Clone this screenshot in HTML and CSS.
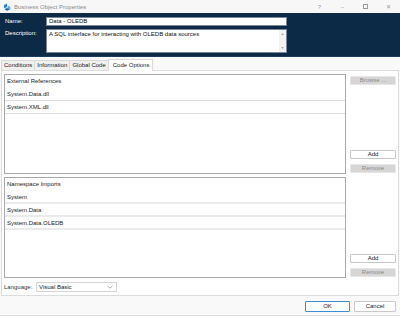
FILE: index.html
```html
<!DOCTYPE html>
<html lang="en">
<head>
  <meta charset="UTF-8">
  <title>Business Object Properties</title>
  <link rel="stylesheet" href="styles.css">
</head>
<body>
  <div class="window">
    <!-- Title bar -->
    <div class="titlebar">
      <svg class="app-icon" width="8" height="8" viewBox="0 0 8 8">
        <path d="M1 2 L4 0.5 L4 4 L1 5.5 Z" fill="#2f7fd0"/>
        <path d="M4.6 2.6 L7.4 4 L7.4 7 L4.6 5.6 Z" fill="#5aa7ea"/>
        <path d="M1.5 6.3 L4 5 L6.6 6.5 L4 7.8 Z" fill="#1e5fa8"/>
      </svg>
      <span class="title">Business Object Properties</span>
      <div class="controls">
        <span>?</span>
        <span>&#8211;</span>
        <span class="max"></span>
        <span>&#10005;</span>
      </div>
    </div>

    <!-- Header -->
    <div class="header">
      <div class="field">
        <label>Name:</label>
        <div class="name-input">Data - OLEDB</div>
      </div>
      <div class="field">
        <label>Description:</label>
        <div class="desc-input">
          <span class="desc-text">A SQL interface for interacting with OLEDB data sources</span>
          <div class="scroll">
            <span>&#9650;</span>
            <span>&#9660;</span>
          </div>
        </div>
      </div>
    </div>

    <!-- Tabs -->
    <div class="tabs">
      <div class="tab">Conditions</div>
      <div class="tab">Information</div>
      <div class="tab">Global Code</div>
      <div class="tab active">Code Options</div>
    </div>

    <div class="panel">
      <div class="section">
        <div class="list">
          <div class="list-head">External References</div>
          <div class="row">System.Data.dll</div>
          <div class="row">System.XML.dll</div>
        </div>
        <div class="side">
          <button class="btn disabled">Browse ...</button>
          <div class="spacer"></div>
          <button class="btn">Add</button>
          <button class="btn disabled">Remove</button>
        </div>
      </div>

      <div class="section second">
        <div class="list">
          <div class="list-head">Namespace Imports</div>
          <div class="row thick">System</div>
          <div class="row thick">System.Data</div>
          <div class="row thick">System.Data.OLEDB</div>
        </div>
        <div class="side">
          <div class="spacer"></div>
          <button class="btn">Add</button>
          <button class="btn disabled">Remove</button>
        </div>
      </div>

      <div class="lang-row">
        <label>Language:</label>
        <div class="select">
          <span>Visual Basic</span>
          <svg width="6" height="4" viewBox="0 0 6 4">
            <path d="M0.5 0.8 L3 3.2 L5.5 0.8" fill="none" stroke="#888" stroke-width="0.7"/>
          </svg>
        </div>
      </div>
    </div>

    <div class="footer">
      <button class="btn ok">OK</button>
      <button class="btn">Cancel</button>
    </div>
  </div>
</body>
</html>
```

FILE: styles.css
```css
/* Global Styles */
* {
  margin: 0;
  padding: 0;
  box-sizing: border-box;
  font-family: 'Liberation Sans', Arial, sans-serif;
}

body {
  width: 400px;
  height: 316px;
  overflow: hidden;
  background: #f9f9f9;
  font-size: 6px;
  color: #222;
}

.window {
  display: flex;
  flex-direction: column;
  height: 316px;
}

/* Title bar */
.titlebar {
  height: 13px;
  display: flex;
  align-items: center;
  padding: 0 0 0 3px;
  background: #f7f7f7;
}

.app-icon {
  margin-right: 3px;
}

.title {
  color: #8a8a8a;
}

.controls {
  margin-left: auto;
  display: flex;
  align-items: center;
  color: #999;
}

.controls span {
  width: 23px;
  text-align: center;
}

.controls .max {
  width: 5px;
  height: 5px;
  border: 0.8px solid #999;
  margin: 0 9px;
}

/* Header */
.header {
  height: 44px;
  background: #0c2945;
  border-bottom: 1px solid #1b3c60;
  padding: 4px 0 0 5px;
}

.field {
  display: flex;
  align-items: flex-start;
}

.field label {
  width: 41px;
  color: #ffffff;
  line-height: 9px;
}

.name-input {
  width: 241px;
  height: 9px;
  background: #ffffff;
  border: 1px solid #7a8899;
  padding: 0 2px;
  line-height: 7px;
  color: #111;
}

.desc-input {
  margin-top: 3px;
  width: 241px;
  height: 24px;
  background: #ffffff;
  border: 1px solid #7a8899;
  display: flex;
  color: #111;
}

.field:last-child label {
  margin-top: 3px;
}

.desc-text {
  flex: 1;
  padding: 1px 2px;
  line-height: 7px;
}

.scroll {
  width: 7px;
  background: #f2f2f2;
  display: flex;
  flex-direction: column;
  justify-content: space-between;
  align-items: center;
  font-size: 3.5px;
  color: #9a9a9a;
  padding: 2px 0;
}

/* Tabs */
.tabs {
  display: flex;
  align-items: flex-end;
  height: 13px;
  padding-left: 1px;
}

.tab {
  height: 10px;
  line-height: 9px;
  padding: 0 2px;
  border: 1px solid #d9d9d9;
  border-bottom: none;
  background: #f0f0f0;
  margin-right: -1px;
  color: #222;
}

.tab.active {
  height: 12px;
  line-height: 10px;
  background: #ffffff;
  padding: 0 3px 0 4px;
  position: relative;
  top: 1px;
}

/* Panel */
.panel {
  margin: 0 1px;
  border: 1px solid #dcdcdc;
  background: #ffffff;
  padding: 3px 2px 0 2px;
  height: 226px;
}

.section {
  display: flex;
  gap: 4px;
  height: 100px;
}

.section.second {
  margin-top: 3px;
  height: 101px;
}

.list {
  width: 342px;
  border: 1px solid #a9a9a9;
  background: #ffffff;
}

.list-head,
.row {
  height: 13px;
  line-height: 12px;
  padding-left: 2px;
}

.row {
  border-bottom: 1px solid #dedede;
}

.row.thick {
  border-bottom: 2px solid #ebebeb;
}

.side {
  width: 46px;
  display: flex;
  flex-direction: column;
  padding-top: 2px;
}

.spacer {
  flex: 1;
}

.btn {
  width: 46px;
  height: 9px;
  font-size: 6px;
  line-height: 7px;
  background: #ffffff;
  border: 1px solid #c8c8c8;
  border-radius: 1px;
  color: #222;
}

.btn + .btn {
  margin-top: 5px;
}

.side .btn:last-child {
  margin-bottom: 1px;
}

.btn.disabled {
  background: #d6d6d6;
  border-color: #e6e6e6;
  color: #8a8a8a;
}

.lang-row {
  display: flex;
  align-items: center;
  margin-top: 4px;
}

.lang-row label {
  width: 32px;
  color: #333;
}

.select {
  width: 81px;
  height: 10px;
  border: 1px solid #d4d4d4;
  background: #ffffff;
  display: flex;
  align-items: center;
  justify-content: space-between;
  padding: 0 3px 0 2px;
}

/* Footer */
.footer {
  flex: 1;
  display: flex;
  justify-content: flex-end;
  align-items: flex-start;
  padding: 5px 4px 0 0;
  gap: 4px;
  border-bottom: 1px solid #e0e0e0;
}

.footer .btn {
  width: 42px;
  height: 11px;
  margin: 0;
}

.footer .btn.ok {
  width: 45px;
  border-color: #3c8fd6;
}
```
